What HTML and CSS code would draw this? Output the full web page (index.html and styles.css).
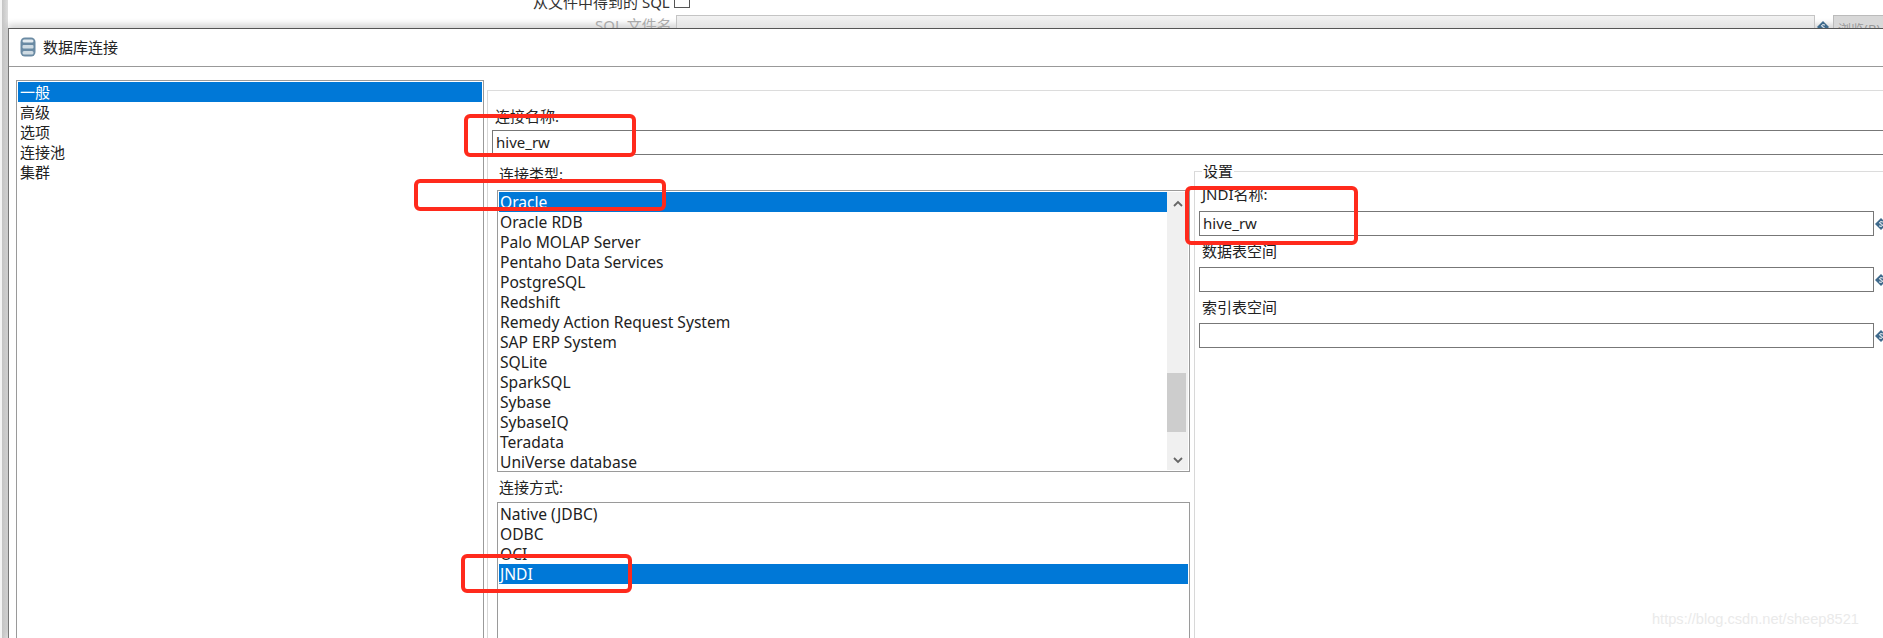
FILE: index.html
```html
<!DOCTYPE html>
<html lang="zh">
<head>
<meta charset="utf-8">
<title>数据库连接</title>
<link rel="stylesheet" href="styles.css">
</head>
<body>
<div class="page">
  <div class="behind">
    <div class="sql-row"><span>从文件中得到的 SQL</span><i class="check"></i></div>
    <div class="file-row">
      <span class="file-label">SQL 文件名</span>
      <i class="file-input"></i>
      <svg class="var small" viewBox="0 0 12 12"><use href="#var"/></svg>
      <span class="browse">浏览(B)...</span>
    </div>
  </div>
  <div class="dialog">
    <header class="title">
      <svg class="db" viewBox="0 0 16 20"><rect x="0.5" y="0.5" width="15" height="19" rx="4.5" fill="#6a8aa3"/><rect x="2.5" y="2.5" width="11" height="3" rx="1.5" fill="#e4ebf0"/><rect x="2.5" y="8" width="11" height="3.5" rx="1" fill="#cfdbe3"/><rect x="2.5" y="14" width="11" height="3.5" rx="1.5" fill="#cfdbe3"/></svg>
      <span>数据库连接</span>
    </header>
    <div class="body">
      <ul class="nav list">
        <li class="sel">一般</li><li>高级</li><li>选项</li><li>连接池</li><li>集群</li>
      </ul>
      <section class="panel">
        <label class="name-label">连接名称:</label>
        <div class="field name-input">hive_rw</div>
        <div class="columns">
          <div class="lists">
            <label class="list-label">连接类型:</label>
            <div class="list types">
              <ul>
                <li class="sel">Oracle</li><li>Oracle RDB</li><li>Palo MOLAP Server</li><li>Pentaho Data Services</li><li>PostgreSQL</li><li>Redshift</li><li>Remedy Action Request System</li><li>SAP ERP System</li><li>SQLite</li><li>SparkSQL</li><li>Sybase</li><li>SybaseIQ</li><li>Teradata</li><li>UniVerse database</li>
              </ul>
              <div class="scroll">
                <svg viewBox="0 0 10 7"><path d="M1 6l4-4 4 4" fill="none" stroke="#666" stroke-width="1.8"/></svg>
                <i class="thumb"></i>
                <svg viewBox="0 0 10 7"><path d="M1 1l4 4 4-4" fill="none" stroke="#666" stroke-width="1.8"/></svg>
              </div>
            </div>
            <label class="list-label method">连接方式:</label>
            <div class="list methods">
              <ul><li>Native (JDBC)</li><li>ODBC</li><li>OCI</li><li class="sel">JNDI</li></ul>
            </div>
          </div>
          <fieldset class="settings">
            <legend>设置</legend>
            <label>JNDI名称:</label>
            <div class="input-row"><div class="field">hive_rw</div><svg class="var" viewBox="0 0 12 12"><use href="#var"/></svg></div>
            <label>数据表空间</label>
            <div class="input-row"><div class="field"></div><svg class="var" viewBox="0 0 12 12"><use href="#var"/></svg></div>
            <label>索引表空间</label>
            <div class="input-row"><div class="field"></div><svg class="var" viewBox="0 0 12 12"><use href="#var"/></svg></div>
          </fieldset>
        </div>
      </section>
    </div>
  </div>
  <i class="mark m1"></i><i class="mark m2"></i><i class="mark m3"></i><i class="mark m4"></i>
  <span class="wm">https://blog.csdn.net/sheep8521</span>
  <svg class="defs" width="0" height="0"><defs><g id="var"><path d="M6 0l6 6-6 6-6-6z" fill="#3f6a8c"/><path d="M8 4.2C7.4 3.5 4.6 3.4 4.5 4.8 4.4 6.2 7.7 5.8 7.6 7.2 7.5 8.6 4.7 8.5 4 7.8" fill="none" stroke="#fff" stroke-width="1"/></g></defs></svg>
</div>
</body>
</html>
```
FILE: styles.css
```css
* { box-sizing: border-box; }
html, body { margin: 0; padding: 0; background: #fff; }
body { font: 15px/20px "Noto Sans", "Noto Sans CJK SC", sans-serif; color: #222; }
.page { position: relative; width: 1883px; height: 638px; overflow: hidden; background: linear-gradient(90deg, #f4f4f4 0 2px, #c4c4c4 2px, #dedede 8px, #fff 8px); }
ul { list-style: none; margin: 0; padding: 0; }
.behind { height: 28px; padding-left: 533px; overflow: hidden; color: #333; }
.sql-row { display: flex; gap: 4px; height: 8px; line-height: 4px; }
.check { display: block; flex: none; width: 16px; height: 16px; margin-top: -8px; border: 1px solid #555; }
.file-row { display: flex; align-items: flex-start; margin: 7px 0 0 62px; color: #aaa; }
.file-label { flex: none; width: 81px; line-height: 20px; }
.file-input { display: block; flex: none; width: 1139px; height: 20px; border: 1px solid #c4c4c4; background: linear-gradient(#f2f2f2, #dcdcdc); }
.var { display: block; flex: none; width: 12px; height: 12px; margin-left: 1px; }
.var.small { margin: 6px 0 0 2px; }
.browse { margin-left: 4px; padding: 3px 4px; flex: none; height: 24px; background: #d8d8d8; border: 1px solid #bbb; color: #999; font-size: 13px; white-space: nowrap; }
.dialog { margin-left: 8px; height: 610px; border-left: 1px solid #777; border-top: 1px solid #555; background: #fff; box-shadow: 0 -4px 6px rgba(0,0,0,.16); }
.title { height: 38px; display: flex; align-items: center; gap: 7px; padding: 0 0 2px 11px; border-bottom: 1px solid #999; color: #222; }
.db { width: 16px; height: 20px; flex: none; }
.body { display: flex; height: 571px; padding: 13px 0 0 7px; }
.list { border: 1px solid #9a9a9a; background: #fff; }
.list li { height: 20px; padding-left: 2px; white-space: nowrap; }
.list .sel { background: #0078d7; color: #fff; }
.nav { width: 468px; flex: none; padding: 1px; margin-bottom: -5px; }
.types li, .methods li { font-size: 15.6px; padding-left: 1px; }
.panel { flex: 1; margin: 10px 0 0 3px; border-left: 1px solid #d8d8d8; border-top: 1px solid #dcdcdc; padding: 15px 0 0 4px; min-width: 0; }
.name-label { display: block; margin-left: 3px; height: 24px; }
.name-input { width: 1500px; padding-left: 4px; line-height: 23px; }
.field { height: 25px; border: 1px solid #777; padding: 1px 3px; line-height: 21px; background: #fff; flex: 1; }
.columns { display: flex; }
.lists { width: 693px; margin-left: 5px; flex: none; }
.list-label { display: block; padding-left: 2px; height: 35px; padding-top: 9px; }
.list-label.method { height: 30px; padding-top: 5px; }
.types { display: flex; height: 282px; padding: 1px; }
.types ul { flex: 1; }
.scroll { width: 21px; flex: none; background: #f0f0f0; display: flex; flex-direction: column; align-items: center; padding-top: 8px; }
.scroll svg { width: 10px; height: 7px; flex: none; }
.thumb { display: block; flex: none; align-self: stretch; height: 59px; margin: 166px 2px 25px 0; background: #cdcdcd; }
.methods { height: 200px; padding: 1px; }
.settings { margin: 8px 0 0 4px; width: 720px; height: 480px; border: 0; border-left: 1px solid #d8d8d8; border-top: 1px solid #dcdcdc; padding: 0 0 0 4px; }
.settings legend { padding: 0 1px; margin-left: 3px; line-height: 16px; }
.settings label { display: block; height: 31px; line-height: 19px; padding: 6px 0 0 3px; }
.settings label:first-of-type { padding-top: 6px; height: 32px; }
.input-row { display: flex; align-items: center; width: 688px; }
.mark { position: absolute; display: block; border: 4px solid #ff2a1c; border-radius: 6px; }
.m1 { left: 464px; top: 114px; width: 172px; height: 43px; }
.m2 { left: 414px; top: 179px; width: 252px; height: 32px; }
.m3 { left: 461px; top: 554px; width: 171px; height: 39px; }
.m4 { left: 1185px; top: 186px; width: 173px; height: 59px; }
.wm { position: absolute; left: 1652px; top: 611px; color: #eaeaea; font: 14.6px "Liberation Sans", sans-serif; }
.defs { position: absolute; }
```
